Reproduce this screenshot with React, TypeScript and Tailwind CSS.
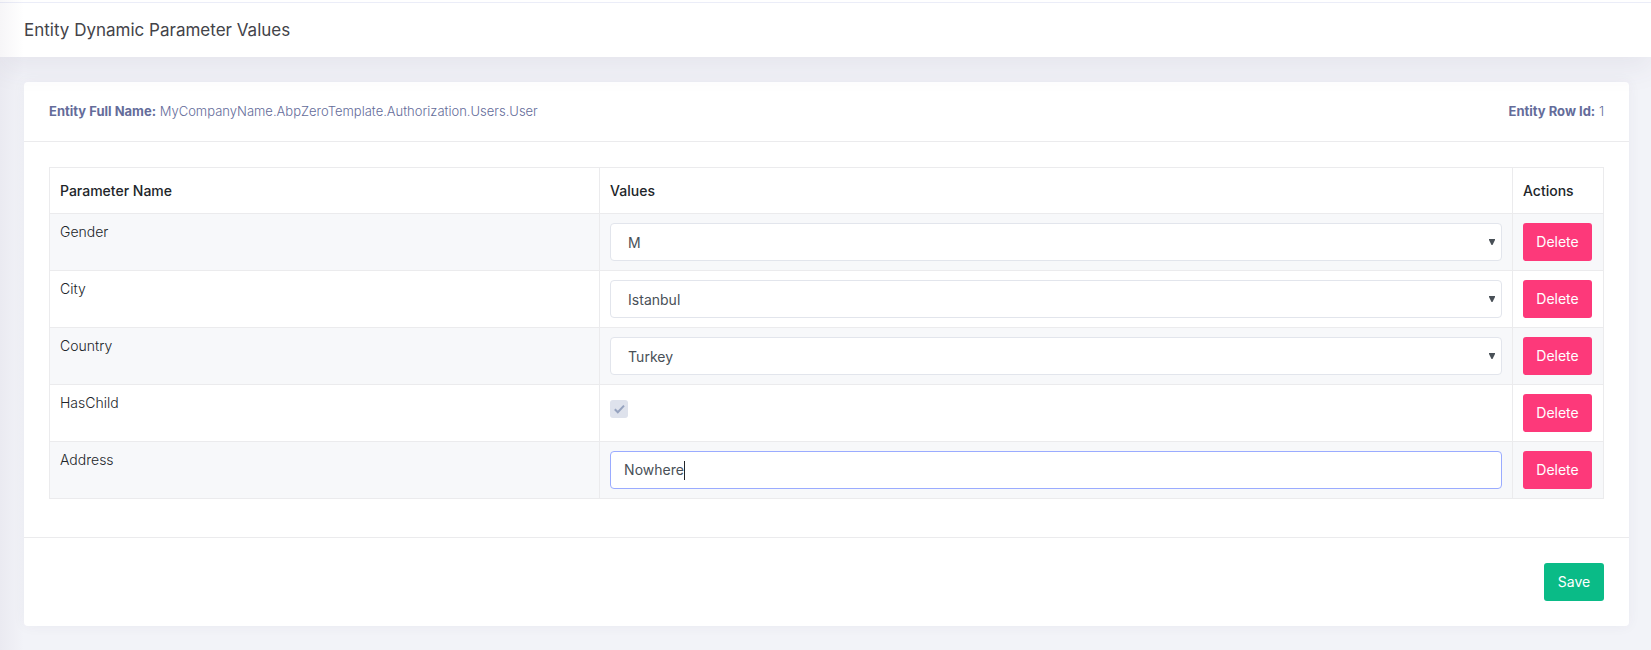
import { useState } from 'react'
import type { ReactNode } from 'react'

const selects = [
	{ name: 'Gender', options: ['M', 'F'] },
	{ name: 'City', options: ['Istanbul', 'Ankara'] },
	{ name: 'Country', options: ['Turkey', 'Germany'] },
]

function Row({ name, children }: { name: string; children: ReactNode }) {
	return (
		<tr className="odd:bg-[#f7f8fa]">
			<td className="border border-[#ebebed] px-[10px] py-[9px] align-top leading-[18px]">
				<label htmlFor={name}>{name}</label>
			</td>
			<td className="border border-[#ebebed] px-[10px] py-[9px] align-top">{children}</td>
			<td className="border border-[#ebebed] px-[10px] py-[9px] align-top">
				<button
					type="button"
					className="block h-[38px] w-[69px] rounded-[3px] bg-[#fd397a] pb-[2px] text-[14px] font-normal text-white"
				>
					Delete
				</button>
			</td>
		</tr>
	)
}

function SelectValue({ id, options }: { id: string; options: string[] }) {
	return (
		<div className="relative">
			<select
				id={id}
				className="block h-[38px] w-full appearance-none rounded-[4px] border border-[#e2e5ec] bg-white px-[17px] font-normal text-[#495057] outline-none"
			>
				{options.map((option) => (
					<option key={option}>{option}</option>
				))}
			</select>
			<svg
				viewBox="0 0 6 6"
				className="pointer-events-none absolute top-4 right-[7px] size-[6px] fill-[#495057]"
			>
				<path d="M0 0h6v1L3.5 6h-1L0 1z" />
			</svg>
		</div>
	)
}

function CheckValue({ id }: { id: string }) {
	const [checked, setChecked] = useState(true)

	return (
		<div className="relative mt-[6px] size-[18px]">
			<input
				id={id}
				type="checkbox"
				checked={checked}
				onChange={(e) => setChecked(e.target.checked)}
				className="block size-[18px] appearance-none rounded-[3px] bg-[#dee2ec]"
			/>
			{checked && (
				<svg
					viewBox="0 0 18 18"
					className="pointer-events-none absolute inset-0 size-[18px] fill-none stroke-[#96a3bf] stroke-2"
				>
					<path d="M4.8 9.2 7.8 12.2 14 5.6" />
				</svg>
			)}
		</div>
	)
}

function TextValue({ id, value }: { id: string; value: string }) {
	return (
		<div className="relative">
			<input
				id={id}
				type="text"
				defaultValue={value}
				className="block h-[38px] w-full rounded-[4px] border border-[#9aabff] bg-white px-[13px] pb-[2px] font-normal text-[#495057] caret-transparent outline-none"
			/>
			<div className="pointer-events-none absolute inset-y-0 left-[14px] flex items-center">
				<span className="invisible font-normal">{value}</span>
				<span className="h-[19px] w-px bg-[#212529]" />
			</div>
		</div>
	)
}

export default function App() {
	return (
		<div className="relative min-h-screen bg-[#f2f3f8] pb-6 font-['Inter','Open_Sans',sans-serif] text-[14px] font-light text-[#212529]">
			<header className="relative z-10 bg-white pt-[2px] shadow-[0_10px_30px_0_rgba(82,63,105,0.08)]">
				<div className="flex h-[55px] items-center border-t border-[#ebedf8] px-6 pt-[2px]">
					<h1 className="text-[17px] font-normal text-[#434349]">Entity Dynamic Parameter Values</h1>
				</div>
			</header>

			<main className="mt-[25px] mr-[22px] ml-6 rounded-[4px] bg-white shadow-[0_0_13px_0_rgba(82,63,105,0.05)]">
				<div className="flex h-[60px] items-center justify-between border-b border-[#ebebed] px-[25px] text-[13px] text-[#646c9a]">
					<p>
						<strong className="font-bold">Entity Full Name:</strong>{' '}
						MyCompanyName.AbpZeroTemplate.Authorization.Users.User
					</p>
					<p>
						<strong className="font-bold">Entity Row Id:</strong> 1
					</p>
				</div>

				<div className="px-[25px] pt-[25px] pb-[38px]">
					<table className="w-full table-fixed border-collapse">
						<colgroup>
							<col className="w-[35.4%]" />
							<col />
							<col className="w-[91px]" />
						</colgroup>
						<thead>
							<tr className="h-[46px] text-left">
								<th className="border border-[#ebebed] px-[10px] font-medium">Parameter Name</th>
								<th className="border border-[#ebebed] px-[10px] font-medium">Values</th>
								<th className="border border-[#ebebed] px-[10px] font-medium">Actions</th>
							</tr>
						</thead>
						<tbody>
							{selects.map(({ name, options }) => (
								<Row key={name} name={name}>
									<SelectValue id={name} options={options} />
								</Row>
							))}
							<Row name="HasChild">
								<CheckValue id="HasChild" />
							</Row>
							<Row name="Address">
								<TextValue id="Address" value="Nowhere" />
							</Row>
						</tbody>
					</table>
				</div>

				<div className="flex justify-end border-t border-[#ebebed] p-[25px]">
					<button
						type="button"
						className="h-[38px] w-[60px] rounded-[3px] bg-[#0abb87] pb-[2px] text-[14px] font-normal text-white"
					>
						Save
					</button>
				</div>
			</main>

			{/* shadow cast by the side menu */}
			<div className="pointer-events-none absolute inset-y-0 left-0 z-20 w-6 bg-linear-to-r from-[#523f69]/5 to-transparent" />
		</div>
	)
}
